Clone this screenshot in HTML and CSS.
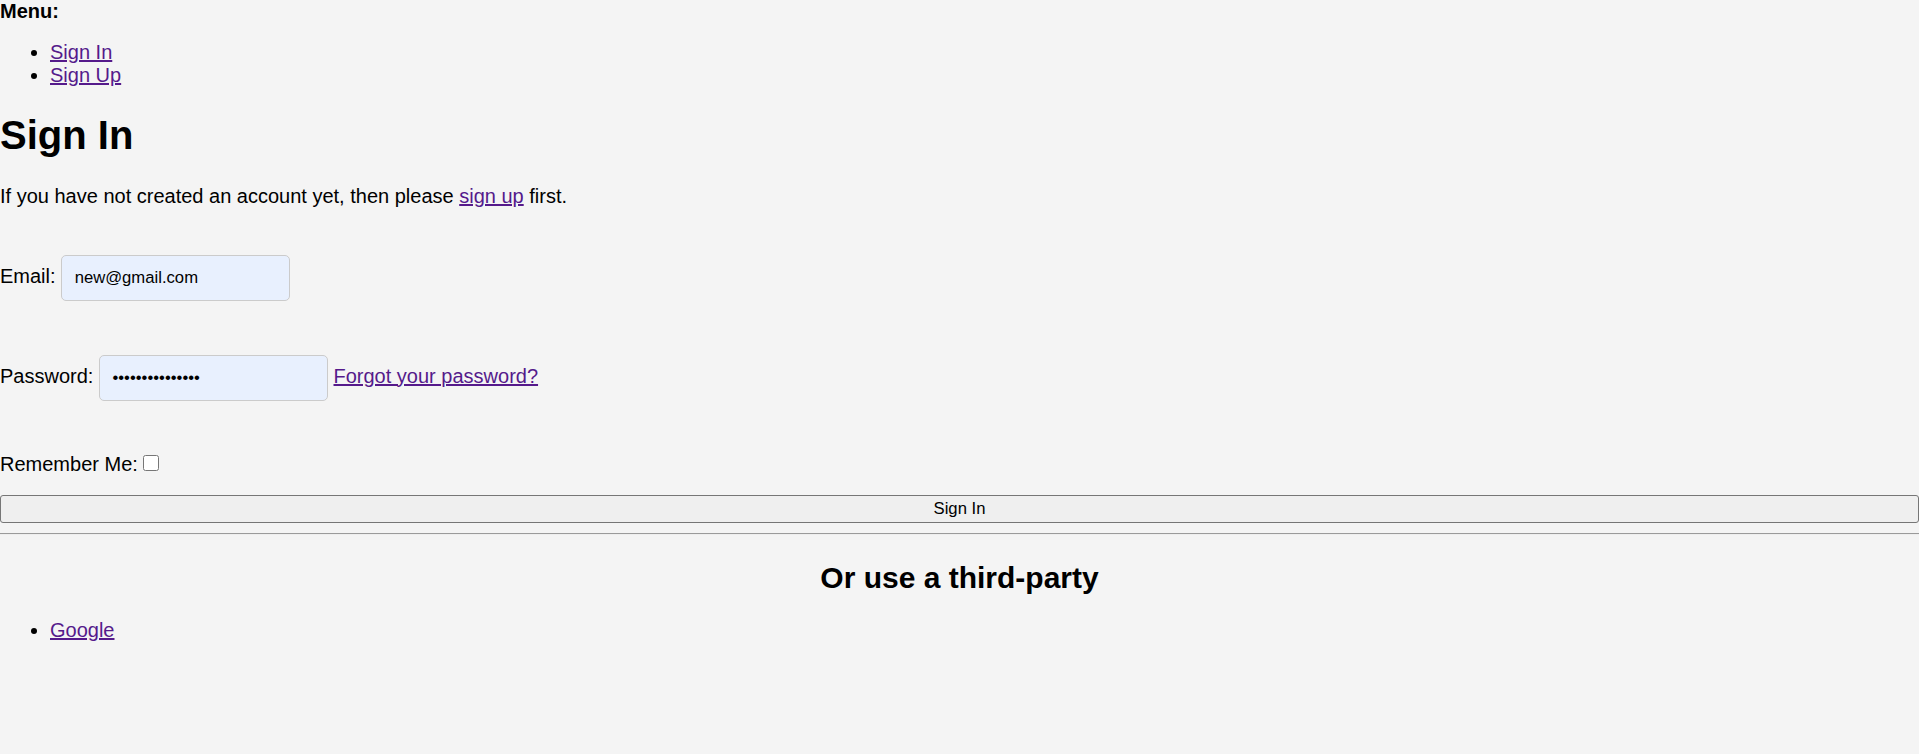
FILE: index.html
```html
<!DOCTYPE html>
<html lang="en">
<head>
<meta charset="utf-8">
<title>Sign In</title>
<link rel="stylesheet" href="styles.css">
</head>
<body>
<nav class="menu">
  <div class="menu-title">Menu:</div>
  <ul class="list list-menu">
    <li><a href="#">Sign In</a></li>
    <li><a href="#">Sign Up</a></li>
  </ul>
</nav>
<main>
  <h1 class="title">Sign In</h1>
  <p class="intro">If you have not created an account yet, then please <a href="#">sign up</a> first.</p>
  <form class="signin" onsubmit="return false">
    <div class="field field-first"><label for="email">Email:</label> <input class="text-input" id="email" type="email" value="new@gmail.com"></div>
    <div class="field"><label for="password">Password:</label> <input class="text-input" id="password" type="password" value="passwordpasswor"> <a href="#">Forgot your password?</a></div>
    <div class="field field-remember"><label for="remember">Remember Me:</label><input class="check" id="remember" type="checkbox"></div>
    <button class="submit" type="submit">Sign In</button>
  </form>
  <hr class="divider">
  <h2 class="third">Or use a third-party</h2>
  <ul class="list">
    <li><a href="#">Google</a></li>
  </ul>
</main>
</body>
</html>
```
FILE: styles.css
```css
html, body {
  background: #f4f4f4;
}
body {
  margin: 0;
  font-family: "Liberation Sans", Arial, sans-serif;
  font-size: 20px;
  color: #000;
}
a {
  color: #551a8b;
}
.menu-title {
  font-weight: bold;
}
.list {
  margin: 20px 0;
  padding-left: 50px;
}
.list-menu {
  margin-top: 17.6px;
}
.title {
  font-size: 40px;
  font-weight: bold;
  margin: 26.8px 0;
}
.intro {
  margin: 20px 0;
}
.signin {
  margin: 0;
}
.field {
  margin-top: 53.2px;
}
.field-first {
  margin-top: 46.7px;
}
.field-remember {
  margin-top: 52px;
}
.text-input {
  box-sizing: border-box;
  width: 229px;
  height: 46.5px;
  padding: 12px 12.5px;
  border: 1px solid #cbcbcb;
  border-radius: 5px;
  background: #e8f0fe;
  font-family: "Liberation Sans", Arial, sans-serif;
  font-size: 16.67px;
  color: #000;
  margin: 0;
  outline: none;
}
.check {
  width: 16px;
  height: 16px;
  margin: 0 4px 4px 5px;
  vertical-align: baseline;
}
.submit {
  display: block;
  box-sizing: border-box;
  width: 100%;
  height: 27.5px;
  margin: 19.3px 0 0;
  padding: 1px 8px;
  border: 1px solid #767676;
  border-radius: 3px;
  background: #efefef;
  font-family: "Liberation Sans", Arial, sans-serif;
  font-size: 16.67px;
  color: #000;
}
.divider {
  margin: 10px 0;
  border: 0;
  border-top: 1px solid #9a9a9a;
  border-bottom: 1px solid #eeeeee;
  height: 0;
}
.third {
  font-size: 30px;
  font-weight: bold;
  text-align: center;
  margin: 26.1px 0 23.7px;
}
```
